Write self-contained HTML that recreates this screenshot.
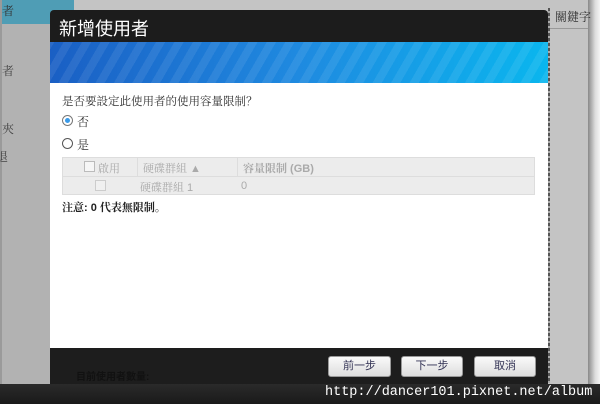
<!DOCTYPE html>
<html><head><meta charset="utf-8"><style>
*{margin:0;padding:0;box-sizing:border-box}
body{width:600px;height:404px;overflow:hidden;position:relative;background:#fff;font-family:"Liberation Sans","Noto Sans CJK TC",sans-serif}
.abs{position:absolute}
.sf{font-family:"Liberation Sans","Noto Serif CJK SC",serif}
</style></head><body>
<div class="abs" style="left:0;top:0;width:600px;height:404px;background:#e8e8e8"></div>
<div class="abs" style="left:0;top:0;width:588px;height:385px;background:#c4c4c4"></div>
<div class="abs" style="left:588px;top:0;width:12px;height:385px;background:linear-gradient(90deg,#888,#ddd 60%,#f4f4f4)"></div>
<div class="abs" style="left:0;top:0;width:74px;height:385px;background:#b2b2b2;border-left:2px solid #9a9a9a"></div>
<div class="abs" style="left:2px;top:0;width:72px;height:24px;background:#4f9db5"></div>
<div class="abs sf" style="left:2px;top:2px;font-size:12px;color:#333">者</div>
<div class="abs sf" style="left:2px;top:62px;font-size:12px;color:#444">者</div>
<div class="abs sf" style="left:2px;top:120px;font-size:12px;color:#444">夾</div>
<div class="abs sf" style="left:-4px;top:148px;font-size:12px;color:#444">退</div>
<div class="abs" style="left:548px;top:28px;width:40px;height:1px;background:#999"></div>
<div class="abs sf" style="left:555px;top:8px;font-size:12px;color:#333">關鍵字</div>
<div class="abs" style="left:548px;top:8px;width:2px;height:375px;background:repeating-linear-gradient(#555 0 3px,#aaa 3px 5px)"></div>
<div class="abs" style="left:50px;top:10px;width:498px;height:32px;background:#1c1c1c;border-radius:4px 4px 0 0"></div>
<div class="abs" style="left:59px;top:15px;font-size:18px;color:#fff">新增使用者</div>
<div class="abs" style="left:50px;top:42px;width:498px;height:41px;background:repeating-linear-gradient(-60deg,rgba(255,255,255,.08) 0 8px,rgba(255,255,255,0) 8px 16px),linear-gradient(90deg,#1a5fc4,#1f8ae0 50%,#0ab6ee)"></div>
<div class="abs" style="left:50px;top:83px;width:498px;height:265px;background:#fff"></div>
<div class="abs sf" style="left:62px;top:93px;font-size:11.5px;color:#333">是否要設定此使用者的使用容量限制？</div>
<div class="abs" style="left:62px;top:115px;width:11px;height:11px;border:1px solid #777;border-radius:50%;background:#fff"><div style="margin:2px;width:5px;height:5px;border-radius:50%;background:#3a9ae8"></div></div>
<div class="abs sf" style="left:77px;top:113px;font-size:12px;color:#333">否</div>
<div class="abs" style="left:62px;top:138px;width:11px;height:11px;border:1px solid #555;border-radius:50%;background:#fff"></div>
<div class="abs sf" style="left:77px;top:136px;font-size:12px;color:#333">是</div>
<div class="abs" style="left:62px;top:157px;width:473px;height:38px;background:#ececec;border:1px solid #ddd"></div>
<div class="abs" style="left:62px;top:176px;width:473px;height:1px;background:#ddd"></div>
<div class="abs" style="left:137px;top:157px;width:1px;height:19px;background:#ddd"></div>
<div class="abs" style="left:237px;top:157px;width:1px;height:19px;background:#ddd"></div>
<div class="abs" style="left:84px;top:161px;width:11px;height:11px;border:1px solid #bbb;background:#f6f6f6"></div>
<div class="abs sf" style="left:98px;top:160px;font-size:11px;color:#aaa">啟用</div>
<div class="abs sf" style="left:143px;top:160px;font-size:11px;color:#aaa">硬碟群組 ▲</div>
<div class="abs sf" style="left:243px;top:160px;font-size:11px;color:#aaa;font-weight:bold">容量限制 (GB)</div>
<div class="abs" style="left:95px;top:180px;width:11px;height:11px;border:1px solid #ccc;background:#f0f0f0"></div>
<div class="abs sf" style="left:140px;top:179px;font-size:11px;color:#aaa">硬碟群組 1</div>
<div class="abs" style="left:241px;top:180px;font-size:11px;color:#aaa">0</div>
<div class="abs sf" style="left:62px;top:199px;font-size:11px;color:#222;font-weight:bold">注意: 0 代表無限制。</div>
<div class="abs" style="left:50px;top:348px;width:498px;height:36px;background:#1d1d1d"></div>
<div class="abs" style="left:76px;top:368px;font-size:10px;color:#111;font-weight:bold">目前使用者數量:</div>
<div class="abs" style="left:328px;top:356px;width:63px;height:21px;background:linear-gradient(#fafafa,#ddd);border:1px solid #999;border-radius:3px;font-size:11px;color:#335;text-align:center;line-height:19px" class="sf">前一步</div>
<div class="abs" style="left:401px;top:356px;width:62px;height:21px;background:linear-gradient(#fafafa,#ddd);border:1px solid #999;border-radius:3px;font-size:11px;color:#335;text-align:center;line-height:19px">下一步</div>
<div class="abs" style="left:474px;top:356px;width:62px;height:21px;background:linear-gradient(#fafafa,#ddd);border:1px solid #999;border-radius:3px;font-size:11px;color:#335;text-align:center;line-height:19px">取消</div>
<div class="abs" style="left:0;top:384px;width:600px;height:20px;background:linear-gradient(#2a2a2a,#1a1a1a)"></div>
<div class="abs" style="left:325px;top:385px;font-family:'Liberation Mono',monospace;font-size:13.5px;color:#fff;white-space:nowrap">http://dancer101.pixnet.net/album</div>
</body></html>
